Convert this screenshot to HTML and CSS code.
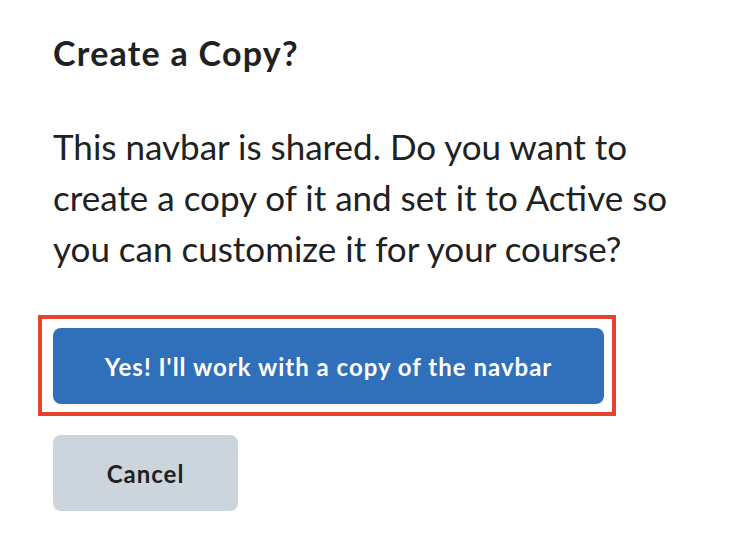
FILE: index.html
```html
<!DOCTYPE html>
<html>
<head>
<meta charset="utf-8">
<link rel="stylesheet" href="styles.css">
</head>
<body>
<div class="dialog">
  <h1 class="title">Create a Copy?</h1>
  <p class="message">This navbar is shared. Do you want to create a copy of it and set it to Active so you can customize it for your course?</p>
  <div class="actions">
    <div class="highlight">
      <button class="btn btn-primary">Yes! I'll work with a copy of the navbar</button>
    </div>
    <button class="btn btn-secondary">Cancel</button>
  </div>
</div>
</body>
</html>
```
FILE: styles.css
```css
html, body {
  margin: 0;
  padding: 0;
  background: #ffffff;
}
body {
  font-family: Lato, "Open Sans", sans-serif;
  color: #202122;
}
.dialog {
  padding: 33px 0 0 53px;
}
.title {
  margin: 0;
  font-size: 34px;
  font-weight: 700;
  line-height: 40px;
  letter-spacing: 1.25px;
}
.message {
  margin: 48px 0 0 0;
  width: 640px;
  font-size: 35px;
  line-height: 51px;
  font-weight: 400;
}
.actions {
  margin-top: 41px;
  display: flex;
  flex-direction: column;
  align-items: flex-start;
  gap: 19px;
}
.highlight {
  margin-left: -15px;
  padding: 9px 8px 8px 11px;
  border: 4px solid #e5432b;
  display: flex;
}
.btn {
  font-family: Lato, "Open Sans", sans-serif;
  font-weight: 700;
  font-size: 24px;
  letter-spacing: 1px;
  border: none;
  border-radius: 8px;
  height: 76px;
  padding: 0;
  cursor: pointer;
}
.btn-primary {
  width: 551px;
  background: #306fba;
  color: #ffffff;
}
.btn-secondary {
  width: 185px;
  background: #cdd5dc;
  color: #202122;
}
```
